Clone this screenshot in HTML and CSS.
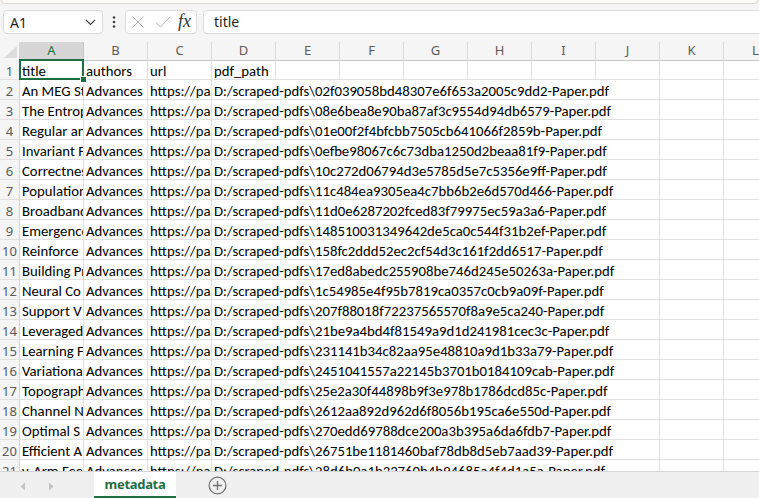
FILE: index.html
```html
<!DOCTYPE html>
<html>
<head>
<meta charset="utf-8">
<link rel="stylesheet" href="styles.css">
</head>
<body>
<div class="app">
  <div class="ribbon-edge"></div>
  <div class="fbar">
    <div class="namebox">
      <span class="nb-text">A1</span>
      <svg class="chev" width="11" height="7" viewBox="0 0 11 7"><polyline points="1,1 5.5,5.5 10,1" fill="none" stroke="#444" stroke-width="1.2"/></svg>
    </div>
    <div class="dots">
      <svg width="4" height="12" viewBox="0 0 4 12"><circle cx="2" cy="1.5" r="1.3" fill="#444"/><circle cx="2" cy="6" r="1.3" fill="#444"/><circle cx="2" cy="10.5" r="1.3" fill="#444"/></svg>
    </div>
    <div class="fxbtns">
      <svg class="ic-x" width="12" height="12" viewBox="0 0 12 12"><path d="M0.5 0.5 L11.5 11.5 M11.5 0.5 L0.5 11.5" stroke="#b4b4b4" stroke-width="1"/></svg>
      <svg class="ic-check" width="16" height="12" viewBox="0 0 16 12"><polyline points="0.8,6.5 5.5,11 15.2,0.8" fill="none" stroke="#b4b4b4" stroke-width="1"/></svg>
      <span class="fx">fx</span>
    </div>
    <div class="finput">title</div>
  </div>

  <div class="sheet">
    <div class="hrow">
      <div class="corner"><svg width="13" height="12" viewBox="0 0 13 12"><polygon points="13,0 13,12 0,12" fill="#dcdcdc"/></svg></div>
      <div class="ch sel">A</div><div class="ch">B</div><div class="ch">C</div><div class="ch">D</div><div class="ch">E</div><div class="ch">F</div><div class="ch">G</div><div class="ch">H</div><div class="ch">I</div><div class="ch">J</div><div class="ch">K</div><div class="ch">L</div>
    </div>

    <div class="row">
      <div class="rh">1</div>
      <div class="c active">title</div><div class="c">authors</div><div class="c">url</div><div class="c">pdf_path</div><div class="c"></div><div class="c"></div><div class="c"></div><div class="c"></div><div class="c"></div><div class="c"></div><div class="c"></div><div class="c"></div>
    </div>
    <div class="row"><div class="rh">2</div><div class="c">An MEG Stu</div><div class="c">Advances</div><div class="c">https://pap</div><div class="c wide">D:/scraped-pdfs\02f039058bd48307e6f653a2005c9dd2-Paper.pdf</div><div class="c"></div><div class="c"></div></div>
    <div class="row"><div class="rh">3</div><div class="c">The Entropy</div><div class="c">Advances</div><div class="c">https://pap</div><div class="c wide">D:/scraped-pdfs\08e6bea8e90ba87af3c9554d94db6579-Paper.pdf</div><div class="c"></div><div class="c"></div></div>
    <div class="row"><div class="rh">4</div><div class="c">Regular and</div><div class="c">Advances</div><div class="c">https://pap</div><div class="c wide">D:/scraped-pdfs\01e00f2f4bfcbb7505cb641066f2859b-Paper.pdf</div><div class="c"></div><div class="c"></div></div>
    <div class="row"><div class="rh">5</div><div class="c">Invariant Fe</div><div class="c">Advances</div><div class="c">https://pap</div><div class="c wide">D:/scraped-pdfs\0efbe98067c6c73dba1250d2beaa81f9-Paper.pdf</div><div class="c"></div><div class="c"></div></div>
    <div class="row"><div class="rh">6</div><div class="c">Correctness</div><div class="c">Advances</div><div class="c">https://pap</div><div class="c wide">D:/scraped-pdfs\10c272d06794d3e5785d5e7c5356e9ff-Paper.pdf</div><div class="c"></div><div class="c"></div></div>
    <div class="row"><div class="rh">7</div><div class="c">Population</div><div class="c">Advances</div><div class="c">https://pap</div><div class="c wide">D:/scraped-pdfs\11c484ea9305ea4c7bb6b2e6d570d466-Paper.pdf</div><div class="c"></div><div class="c"></div></div>
    <div class="row"><div class="rh">8</div><div class="c">Broadband</div><div class="c">Advances</div><div class="c">https://pap</div><div class="c wide">D:/scraped-pdfs\11d0e6287202fced83f79975ec59a3a6-Paper.pdf</div><div class="c"></div><div class="c"></div></div>
    <div class="row"><div class="rh">9</div><div class="c">Emergence</div><div class="c">Advances</div><div class="c">https://pap</div><div class="c wide">D:/scraped-pdfs\148510031349642de5ca0c544f31b2ef-Paper.pdf</div><div class="c"></div><div class="c"></div></div>
    <div class="row"><div class="rh">10</div><div class="c">Reinforce</div><div class="c">Advances</div><div class="c">https://pap</div><div class="c wide">D:/scraped-pdfs\158fc2ddd52ec2cf54d3c161f2dd6517-Paper.pdf</div><div class="c"></div><div class="c"></div></div>
    <div class="row"><div class="rh">11</div><div class="c">Building Pr</div><div class="c">Advances</div><div class="c">https://pap</div><div class="c wide">D:/scraped-pdfs\17ed8abedc255908be746d245e50263a-Paper.pdf</div><div class="c"></div><div class="c"></div></div>
    <div class="row"><div class="rh">12</div><div class="c">Neural Co</div><div class="c">Advances</div><div class="c">https://pap</div><div class="c wide">D:/scraped-pdfs\1c54985e4f95b7819ca0357c0cb9a09f-Paper.pdf</div><div class="c"></div><div class="c"></div></div>
    <div class="row"><div class="rh">13</div><div class="c">Support V</div><div class="c">Advances</div><div class="c">https://pap</div><div class="c wide">D:/scraped-pdfs\207f88018f72237565570f8a9e5ca240-Paper.pdf</div><div class="c"></div><div class="c"></div></div>
    <div class="row"><div class="rh">14</div><div class="c">Leveraged</div><div class="c">Advances</div><div class="c">https://pap</div><div class="c wide">D:/scraped-pdfs\21be9a4bd4f81549a9d1d241981cec3c-Paper.pdf</div><div class="c"></div><div class="c"></div></div>
    <div class="row"><div class="rh">15</div><div class="c">Learning F</div><div class="c">Advances</div><div class="c">https://pap</div><div class="c wide">D:/scraped-pdfs\231141b34c82aa95e48810a9d1b33a79-Paper.pdf</div><div class="c"></div><div class="c"></div></div>
    <div class="row"><div class="rh">16</div><div class="c">Variational</div><div class="c">Advances</div><div class="c">https://pap</div><div class="c wide">D:/scraped-pdfs\2451041557a22145b3701b0184109cab-Paper.pdf</div><div class="c"></div><div class="c"></div></div>
    <div class="row"><div class="rh">17</div><div class="c">Topographic</div><div class="c">Advances</div><div class="c">https://pap</div><div class="c wide">D:/scraped-pdfs\25e2a30f44898b9f3e978b1786dcd85c-Paper.pdf</div><div class="c"></div><div class="c"></div></div>
    <div class="row"><div class="rh">18</div><div class="c">Channel N</div><div class="c">Advances</div><div class="c">https://pap</div><div class="c wide">D:/scraped-pdfs\2612aa892d962d6f8056b195ca6e550d-Paper.pdf</div><div class="c"></div><div class="c"></div></div>
    <div class="row"><div class="rh">19</div><div class="c">Optimal S</div><div class="c">Advances</div><div class="c">https://pap</div><div class="c wide">D:/scraped-pdfs\270edd69788dce200a3b395a6da6fdb7-Paper.pdf</div><div class="c"></div><div class="c"></div></div>
    <div class="row"><div class="rh">20</div><div class="c">Efficient A</div><div class="c">Advances</div><div class="c">https://pap</div><div class="c wide">D:/scraped-pdfs\26751be1181460baf78db8d5eb7aad39-Paper.pdf</div><div class="c"></div><div class="c"></div></div>
    <div class="row"><div class="rh">21</div><div class="c">ν-Arm Fee</div><div class="c">Advances</div><div class="c">https://pap</div><div class="c wide">D:/scraped-pdfs\28d6b0a1b33760b4b94685a4f4d1a5a-Paper.pdf</div><div class="c"></div><div class="c"></div></div>
  </div>

  <div class="tabbar">
    <div class="navs">
      <svg width="6" height="9" viewBox="0 0 6 9"><polygon points="5,0.5 5,8.5 0.5,4.5" fill="#c4c4c4"/></svg>
      <svg width="6" height="9" viewBox="0 0 6 9"><polygon points="1,0.5 1,8.5 5.5,4.5" fill="#c4c4c4"/></svg>
    </div>
    <div class="tab">metadata</div>
    <div class="addsheet">
      <svg width="19" height="19" viewBox="0 0 19 19"><circle cx="9.5" cy="9.5" r="8.4" fill="none" stroke="#6e6e6e" stroke-width="1.2"/><path d="M9.5 5 V14 M5 9.5 H14" stroke="#6e6e6e" stroke-width="1.3"/></svg>
    </div>
  </div>
</div>
</body>
</html>
```

FILE: styles.css
```css
html, body {
  margin: 0;
  padding: 0;
}
body {
  width: 759px;
  height: 498px;
  overflow: hidden;
  background: #f5f5f5;
  font-family: "Noto Sans", "Open Sans", sans-serif;
  color: #222;
}
.app {
  width: 759px;
  height: 498px;
  display: flex;
  flex-direction: column;
  overflow: hidden;
}
.ribbon-edge {
  height: 3px;
  margin: 0 1px;
  background: #fcfbf9;
  border: 1px solid #dedbd6;
  border-top: 0;
  border-radius: 0 0 5px 5px;
  flex: none;
}
.fbar {
  flex: none;
  height: 38px;
  box-sizing: border-box;
  padding: 6px 0 0 3px;
  display: flex;
  align-items: flex-start;
}
.namebox {
  width: 100px;
  height: 24px;
  box-sizing: border-box;
  background: #fff;
  border: 1px solid #d9d9d9;
  border-radius: 4px;
  display: flex;
  align-items: center;
  padding: 0 6px 0 6px;
}
.nb-text {
  font-size: 14px;
  color: #1f1f1f;
}
.chev {
  margin-left: auto;
  margin-top: 1px;
}
.dots {
  width: 22px;
  height: 24px;
  display: flex;
  align-items: center;
  justify-content: center;
}
.fxbtns {
  width: 72px;
  height: 24px;
  box-sizing: border-box;
  background: #fff;
  border: 1px solid #dcdcdc;
  border-radius: 4px;
  display: flex;
  align-items: center;
  padding-left: 6px;
}
.ic-check {
  margin-left: 11px;
}
.fx {
  margin-left: 7px;
  font-family: "Liberation Serif", "DejaVu Serif", serif;
  font-style: italic;
  font-size: 18px;
  color: #333;
  line-height: 20px;
  margin-top: -2px;
}
.finput {
  flex: 1;
  margin-left: 6px;
  margin-right: -10px;
  height: 24px;
  box-sizing: border-box;
  background: #fff;
  border: 1px solid #dcdcdc;
  border-radius: 4px;
  padding-left: 10px;
  font-size: 14px;
  line-height: 22px;
  color: #1f1f1f;
}

/* sheet grid */
.sheet {
  flex: none;
  height: 429px;
  overflow: hidden;
  background: #fff;
}
.hrow, .row {
  display: grid;
  grid-template-columns: 20px repeat(12, 64px);
}
.hrow {
  height: 18px;
  background: #f5f5f5;
}
.corner {
  box-sizing: border-box;
  border-right: 1px solid #d4d4d4;
  border-bottom: 1px solid #c9c9c9;
  display: flex;
  align-items: flex-end;
  justify-content: flex-end;
  padding: 0 2px 2px 0;
}
.ch {
  box-sizing: border-box;
  border-right: 1px solid #dadada;
  border-bottom: 1px solid #c9c9c9;
  text-align: center;
  font-size: 13px;
  line-height: 17px;
  color: #5a5a5a;
}
.ch.sel {
  background: #d6d6d6;
  color: #1d6f42;
  border-bottom: 2px solid #1d6f42;
  border-right-color: #c4c4c4;
}
.row {
  height: 20px;
}
.rh {
  box-sizing: border-box;
  background: #f5f5f5;
  border-right: 1px solid #d4d4d4;
  border-bottom: 1px solid #e1e1e1;
  font-size: 13px;
  line-height: 14px;
  color: #5a5a5a;
  display: flex;
  align-items: flex-end;
  justify-content: center;
  padding-bottom: 1px;
}
.c {
  box-sizing: border-box;
  border-right: 1px solid #e1e1e1;
  border-bottom: 1px solid #e1e1e1;
  font-family: Carlito, Lato, sans-serif;
  font-size: 14.75px;
  line-height: 15px;
  color: #000;
  white-space: nowrap;
  overflow: hidden;
  display: flex;
  align-items: flex-end;
  padding: 0 0 0 2px;
}
.c.wide {
  grid-column: span 7;
}
.c.active {
  position: relative;
  overflow: visible;
}
.c.active::after {
  content: "";
  position: absolute;
  left: -1px;
  top: -1px;
  right: -1px;
  bottom: -1px;
  border: 2px solid #1d6f42;
  pointer-events: none;
}
.c.active::before {
  content: "";
  position: absolute;
  right: -4px;
  bottom: -4px;
  width: 5px;
  height: 5px;
  background: #1d6f42;
  border: 1px solid #fff;
  z-index: 2;
}

/* sheet tabs */
.tabbar {
  flex: 1;
  box-sizing: border-box;
  background: #f0f0f0;
  border-top: 1px solid #d4d4d4;
  display: flex;
  align-items: stretch;
}
.navs {
  width: 94px;
  display: flex;
  align-items: center;
  padding-left: 20px;
  box-sizing: border-box;
  gap: 22px;
}
.tab {
  width: 82px;
  box-sizing: border-box;
  background: #fff;
  border-bottom: 3px solid #1d6f42;
  margin-bottom: 2px;
  font-family: "Noto Sans", "Open Sans", sans-serif;
  font-weight: 700;
  font-size: 13px;
  letter-spacing: -0.3px;
  color: #1d6f42;
  text-align: center;
  line-height: 24px;
}
.addsheet {
  margin-left: 32px;
  display: flex;
  align-items: center;
  padding-bottom: 2px;
}
```
